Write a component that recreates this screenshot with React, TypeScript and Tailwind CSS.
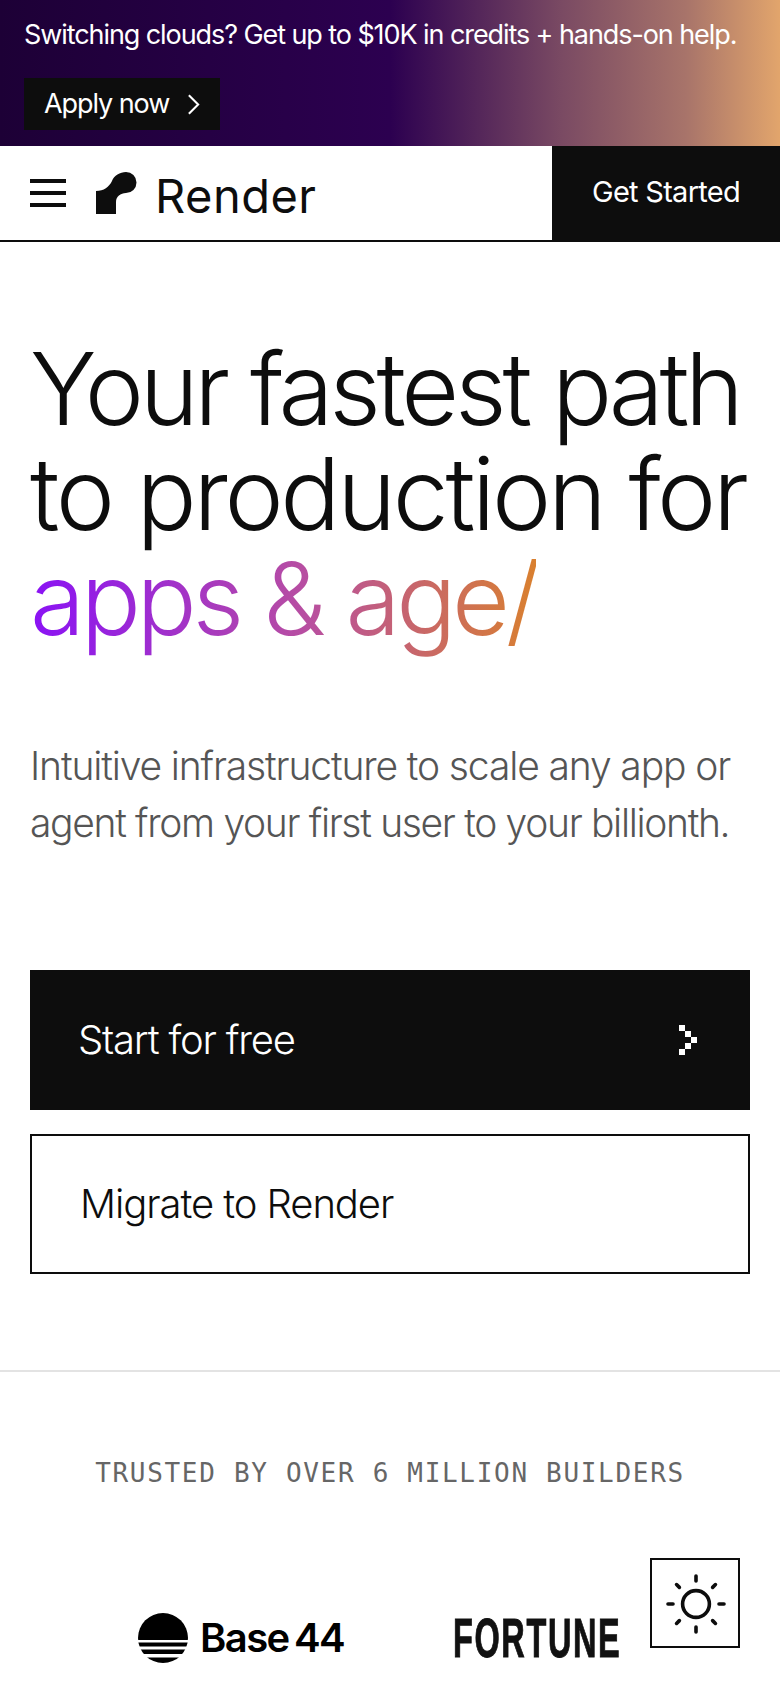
const INTER = "font-['Inter','Liberation_Sans',sans-serif]";

function HamburgerIcon() {
  return (
    <svg viewBox="0 0 36 28" className="h-[28px] w-[36px]" fill="#0d0d0d">
      <rect x="0" y="0" width="36" height="4" />
      <rect x="0" y="12" width="36" height="4" />
      <rect x="0" y="24" width="36" height="4" />
    </svg>
  );
}

function RenderMark() {
  return (
    <svg viewBox="0 0 41 42" className="h-[42px] w-[41px]" fill="#0d0d0d">
      <path d="M0 19 C8 19 13 15 16 9 C18 3.5 24 0 30 0 A10.5 10.5 0 0 1 30 21 C24.5 21 20 24.5 20 30 L20 42 L0 42 Z" />
    </svg>
  );
}

function PixelChevron() {
  const cells = [
    [0, 0],
    [1, 1],
    [2, 2],
    [1, 3],
    [0, 4],
  ];
  return (
    <svg viewBox="0 0 18 30" className="h-[30px] w-[18px]" fill="#fff" shapeRendering="crispEdges">
      {cells.map(([x, y]) => (
        <rect key={`${x}-${y}`} x={x * 6} y={y * 6} width="6" height="6" />
      ))}
    </svg>
  );
}

function Base44Logo() {
  return (
    <div className="flex items-center gap-[12px]">
      <svg viewBox="0 0 50 50" className="h-[50px] w-[50px]">
        <defs>
          <clipPath id="base44-disc">
            <circle cx="25" cy="25" r="25" />
          </clipPath>
        </defs>
        <g clipPath="url(#base44-disc)" fill="#000">
          <rect x="0" y="0" width="50" height="27" />
          <rect x="0" y="29.5" width="50" height="4" />
          <rect x="0" y="36.5" width="50" height="4.5" />
          <rect x="0" y="44.5" width="50" height="5.5" />
        </g>
      </svg>
      <span className={`${INTER} text-[40px] leading-none font-semibold tracking-[-0.04em] text-black`}>
        Base<span className="ml-[-3px]"> 44</span>
      </span>
    </div>
  );
}

function SunIcon() {
  const rays = [0, 45, 90, 135, 180, 225, 270, 315];
  return (
    <svg viewBox="0 0 64 64" className="h-[64px] w-[64px]" fill="none" stroke="#0d0d0d" strokeWidth="3.6" strokeLinecap="round">
      <circle cx="32" cy="32" r="13.4" />
      {rays.map((deg) => (
        <line key={deg} x1="32" y1={deg % 90 === 0 ? 4 : 4.5} x2="32" y2={deg % 90 === 0 ? 9 : 8.5} transform={`rotate(${deg} 32 32)`} />
      ))}
    </svg>
  );
}

export default function App() {
  return (
    <div className={`${INTER} relative h-[1688px] w-[780px] overflow-hidden bg-white text-[#0d0d0d]`}>
      <div className="flex h-[146px] flex-col items-start bg-[linear-gradient(90deg,#1d0036_0%,#2c0050_50%,#7a4a63_72%,#a8746a_88%,#e2a56c_100%)] px-6 pt-[18px]">
        <p className="text-[27px] leading-[34px] tracking-[-0.04em] whitespace-nowrap text-white">
          Switching clouds? Get up to $10K in credits + hands-on help.
        </p>
        <a className="mt-[26px] flex h-[52px] w-[196px] items-center gap-[18px] bg-[#0d0d0d] pl-5 text-[27px] tracking-[-0.04em] text-white">
          Apply now
          <svg viewBox="0 0 14 22" className="h-[21px] w-[13px]" fill="none" stroke="#fff" strokeWidth="2.2">
            <path d="M2 1 L12 11 L2 21" />
          </svg>
        </a>
      </div>

      <header className="flex h-[96px] items-stretch justify-between border-b-2 border-[#0d0d0d]">
        <div className="flex items-center pl-[30px]">
          <HamburgerIcon />
          <div className="ml-[30px] flex items-center gap-[18px]">
            <RenderMark />
            <span className="mt-[5px] text-[47px] leading-none font-normal tracking-[0.01em]">Render</span>
          </div>
        </div>
        <a className="flex w-[228px] items-center justify-center bg-[#0d0d0d] pb-[3px] text-[29px] tracking-[-0.025em] text-white">
          Get Started
        </a>
      </header>

      <main className="px-[30px] pt-[94px]">
        <h1 className="text-[100px] leading-[105px] font-light">
          <span className="block tracking-[-0.0425em] whitespace-nowrap">Your fastest path</span>
          <span className="block tracking-[-0.033em] whitespace-nowrap">to production for</span>
          <span className="-mb-[12px] block w-fit bg-[linear-gradient(90deg,#8a12f5_0%,#b84fa0_55%,#d9802f_100%)] bg-clip-text pb-[12px] tracking-[-0.043em] text-transparent">
            apps &amp; age/
          </span>
        </h1>

        <p className="mt-[86px] text-[39px] leading-[57px] font-light whitespace-nowrap text-[#555555]">
          <span className="block tracking-[-0.029em]">Intuitive infrastructure to scale any app or</span>
          <span className="block tracking-[-0.034em]">agent from your first user to your billionth.</span>
        </p>

        <div className="mt-[119px] flex flex-col gap-[24px]">
          <a className="flex h-[140px] items-center justify-between bg-[#0d0d0d] pr-[53px] pl-[48px] text-[40px] font-light tracking-[-0.03em] text-white">
            Start for free
            <PixelChevron />
          </a>
          <a className="flex h-[140px] items-center border-2 border-[#0d0d0d] pl-[48px] text-[40px] font-light tracking-[-0.027em]">
            Migrate to Render
          </a>
        </div>
      </main>

      <div className="mt-[96px] border-t-2 border-[#e3e3e3] pt-[85px]">
        <p className="text-center font-['DejaVu_Sans_Mono','Liberation_Mono',monospace] text-[26px] leading-[32px] tracking-[0.065em] text-[#666666]">
          TRUSTED BY OVER 6 MILLION BUILDERS
        </p>
        <div className="mt-[121px] flex items-center pl-[138px]">
          <Base44Logo />
          <span className="ml-[109px] inline-block origin-left scale-x-[0.58] font-['Liberation_Sans',sans-serif] text-[56px] leading-none font-bold tracking-[0.05em] text-[#111111] [-webkit-text-stroke:1px_#111111]">
            FORTUNE
          </span>
        </div>
      </div>

      <button className="absolute top-[1558px] left-[650px] flex h-[90px] w-[90px] items-center justify-center border-2 border-[#0d0d0d] bg-white pt-[2px] pl-[2px]">
        <SunIcon />
      </button>
    </div>
  );
}
